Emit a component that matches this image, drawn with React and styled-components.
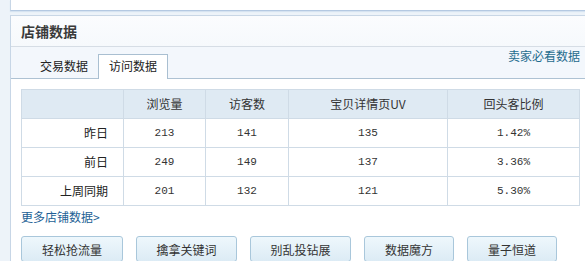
import React, { useState } from 'react';
import styled, { createGlobalStyle } from 'styled-components';

const GlobalStyle = createGlobalStyle`
  body {
    margin: 0;
    background: #edf3f9;
    font-family: "Noto Sans CJK SC", "Noto Sans", sans-serif;
    font-size: 12px;
    color: #333;
    overflow: hidden;
  }
`;

const rows = [
  { label: '昨日', pv: 213, uv: 141, item: 135, back: '1.42%' },
  { label: '前日', pv: 249, uv: 149, item: 137, back: '3.36%' },
  { label: '上周同期', pv: 201, uv: 132, item: 121, back: '5.30%' }
];

const tools = [
  { name: '轻松抢流量', width: 102 },
  { name: '擒拿关键词', width: 101 },
  { name: '别乱投钻展', width: 101 },
  { name: '数据魔方', width: 90 },
  { name: '量子恒道', width: 90 }
];

const App = () => {
  const [activeTab, setActiveTab] = useState('visit');

  return (
    <Page>
      <GlobalStyle />
      <TopPanel />
      <Panel>
        <PanelHeader>店铺数据</PanelHeader>
        <TabBar>
          <Tab
            className={activeTab === 'trade' ? 'active' : ''}
            onClick={() => setActiveTab('trade')}
          >
            交易数据
          </Tab>
          <Tab
            className={activeTab === 'visit' ? 'active' : ''}
            onClick={() => setActiveTab('visit')}
          >
            访问数据
          </Tab>
          <SideLink href="#">卖家必看数据</SideLink>
        </TabBar>
        <Body>
          <DataTable>
            <colgroup>
              <col style={{ width: 102 }} />
              <col style={{ width: 82 }} />
              <col style={{ width: 83 }} />
              <col style={{ width: 159 }} />
              <col style={{ width: 132 }} />
            </colgroup>
            <thead>
              <tr>
                <Th></Th>
                <Th>浏览量</Th>
                <Th>访客数</Th>
                <Th>宝贝详情页UV</Th>
                <Th>回头客比例</Th>
              </tr>
            </thead>
            <tbody>
              {rows.map((row) => (
                <tr key={row.label}>
                  <Label>{row.label}</Label>
                  <Num>{row.pv}</Num>
                  <Num>{row.uv}</Num>
                  <Num>{row.item}</Num>
                  <Num>{row.back}</Num>
                </tr>
              ))}
            </tbody>
          </DataTable>
          <MoreLink href="#">更多店铺数据&gt;</MoreLink>
          <ToolRow>
            {tools.map((t) => (
              <ToolButton key={t.name} $width={t.width}>
                {t.name}
              </ToolButton>
            ))}
          </ToolRow>
        </Body>
      </Panel>
    </Page>
  );
};

const Page = styled.div`
  padding-left: 10px;
`;

const TopPanel = styled.div`
  height: 10px;
  background: #fff;
  border-left: 1px solid #c7d6e6;
  border-bottom: 1px solid #b4c9e2;
  box-shadow: 0 1px 1px #d6e3f1;
`;

const Panel = styled.div`
  margin-top: 4px;
  background: #fff;
  border-left: 1px solid #c7d6e6;
  border-top: 1px solid #c9d7e6;
  height: 260px;
`;

const PanelHeader = styled.div`
  height: 30px;
  line-height: 30px;
  padding-left: 10px;
  font-size: 14px;
  font-weight: bold;
  color: #3a3a3a;
  background: linear-gradient(#fbfcfe, #f6f9fc);
  border-bottom: 1px solid #d6dde5;
`;

const TabBar = styled.div`
  height: 31px;
  display: flex;
  align-items: flex-end;
  padding-left: 19px;
  background: #f3f7fc;
  border-bottom: 1px solid #aec2d3;
`;

const Tab = styled.div`
  width: 68px;
  height: 24px;
  line-height: 19px;
  text-align: center;
  font-size: 12px;
  color: #222;
  cursor: pointer;
  box-sizing: border-box;
  border: 1px solid transparent;
  border-bottom: none;
  margin-bottom: -1px;
  &.active {
    width: 70px;
    background: #fff;
    border-color: #a9bfd1;
    height: 25px;
    line-height: 21px;
  }
`;

const SideLink = styled.a`
  margin-left: auto;
  align-self: flex-start;
  margin-top: 1px;
  margin-right: 5px;
  line-height: 16px;
  color: #1f6c8e;
  text-decoration: none;
  font-size: 12px;
`;

const Body = styled.div`
  padding: 10px 0 0 10px;
`;

const DataTable = styled.table`
  width: 558px;
  border-collapse: collapse;
  table-layout: fixed;
`;

const Th = styled.th`
  height: 28px;
  padding: 0;
  line-height: 16px;
  background: #dfeaf3;
  border: 1px solid #cfdbe6;
  font-weight: normal;
  font-size: 12px;
  color: #333;
  text-align: center;
`;

const Label = styled.td`
  height: 28px;
  padding: 0 15px 0 0;
  line-height: 16px;
  border: 1px solid #cfdbe6;
  text-align: right;
  font-size: 12px;
  color: #222;
`;

const Num = styled.td`
  height: 28px;
  padding: 0;
  line-height: 16px;
  border: 1px solid #cfdbe6;
  text-align: center;
  font-family: "Liberation Mono", "DejaVu Sans Mono", monospace;
  font-size: 11px;
  color: #333;
`;

const MoreLink = styled.a`
  display: block;
  margin-top: 3px;
  height: 16px;
  line-height: 16px;
  color: #235f95;
  text-decoration: none;
  font-size: 12px;
`;

const ToolRow = styled.div`
  display: flex;
  gap: 13px;
  margin-top: 11px;
`;

const ToolButton = styled.button`
  width: ${(p) => p.$width}px;
  height: 26px;
  padding: 0;
  border: 1px solid #a9c7db;
  border-radius: 3px;
  background: linear-gradient(#eef7fc, #dcebf5);
  font-family: "Noto Sans CJK SC", "Noto Sans", sans-serif;
  font-size: 12px;
  color: #333;
  cursor: pointer;
`;

export default App;
